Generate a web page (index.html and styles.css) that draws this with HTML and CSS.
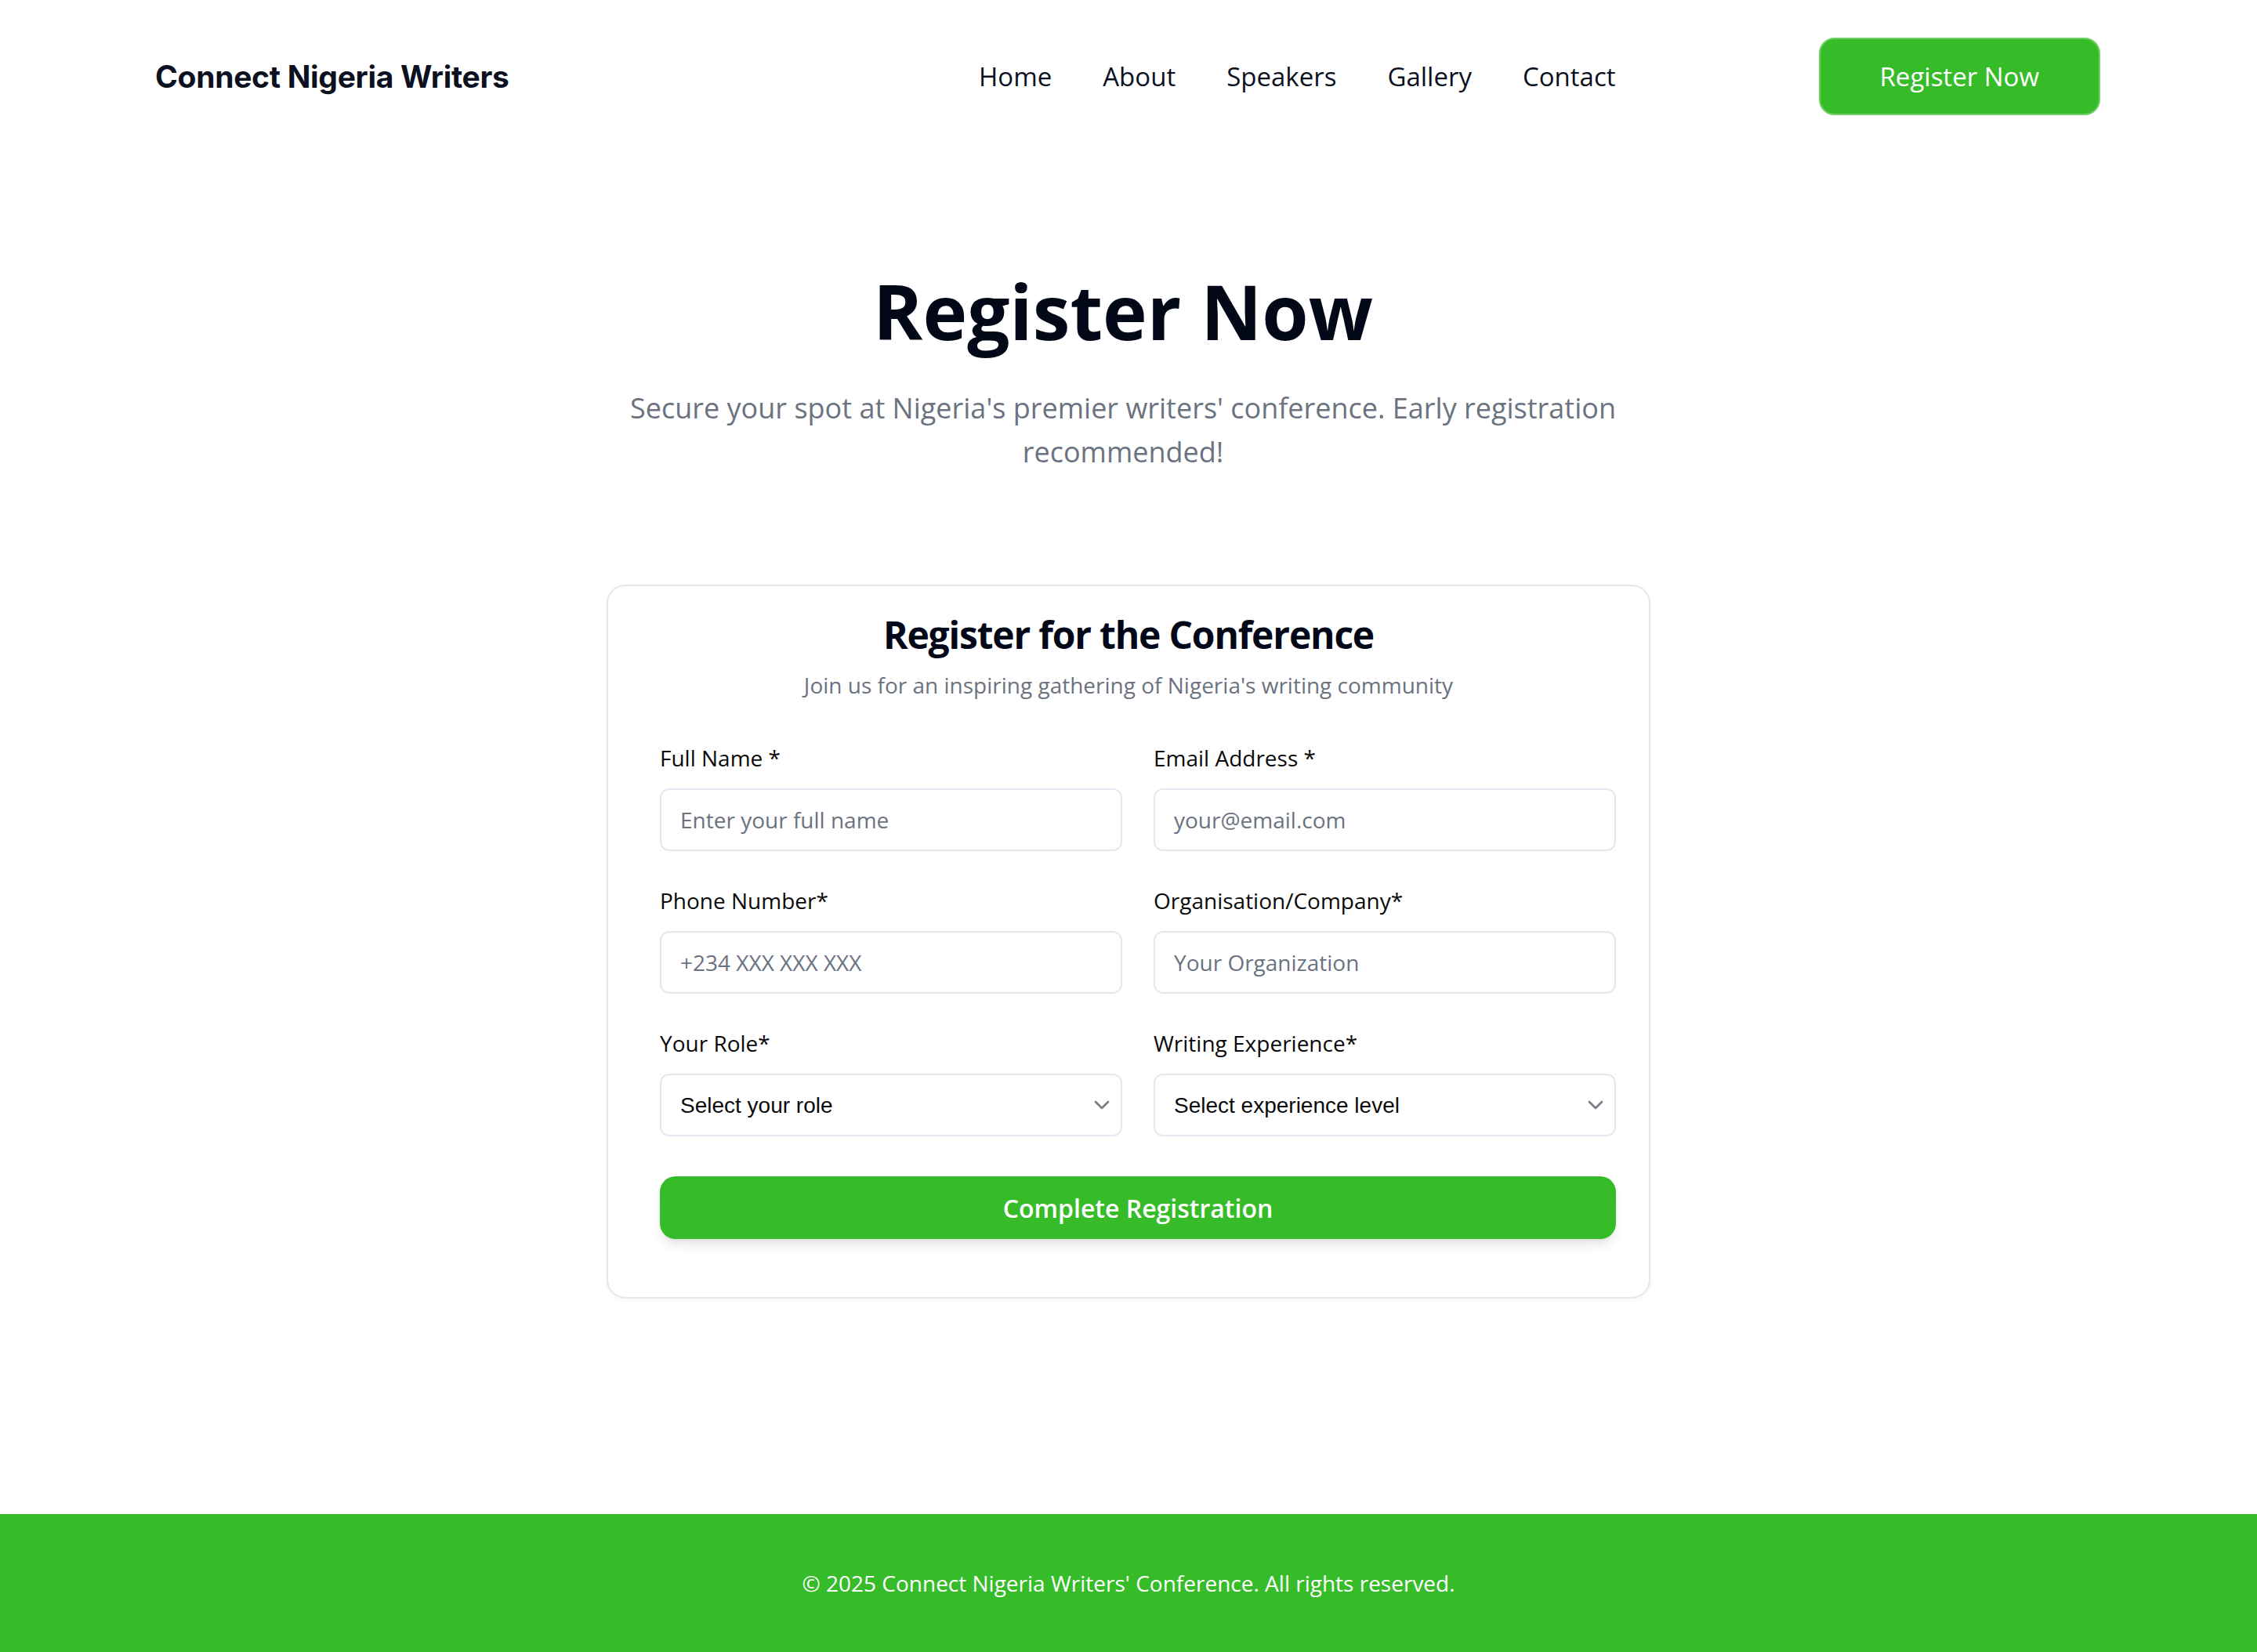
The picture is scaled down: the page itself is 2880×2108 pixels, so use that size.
FILE: index.html
```html
<!DOCTYPE html>
<html lang="en">
<head>
<meta charset="utf-8">
<title>Register Now - Connect Nigeria Writers</title>
<link rel="stylesheet" href="styles.css">
</head>
<body>
<header class="site-header">
  <a class="logo" href="#">Connect Nigeria Writers</a>
  <nav class="nav">
    <a href="#">Home</a>
    <a href="#">About</a>
    <a href="#">Speakers</a>
    <a href="#">Gallery</a>
    <a href="#">Contact</a>
  </nav>
  <a class="header-btn" href="#">Register Now</a>
</header>

<main class="main">
  <section class="hero">
    <h1 class="hero-title">Register Now</h1>
    <p class="hero-sub">Secure your spot at Nigeria's premier writers' conference. Early registration recommended!</p>
  </section>

  <section class="card">
    <div class="card-head">
      <h2 class="card-title">Register for the Conference</h2>
      <p class="card-sub">Join us for an inspiring gathering of Nigeria's writing community</p>
    </div>
    <form class="form">
      <div class="grid">
        <div class="field">
          <label class="label" for="name">Full Name *</label>
          <input class="input" id="name" type="text" placeholder="Enter your full name">
        </div>
        <div class="field">
          <label class="label" for="email">Email Address *</label>
          <input class="input" id="email" type="email" placeholder="your@email.com">
        </div>
        <div class="field">
          <label class="label" for="phone">Phone Number*</label>
          <input class="input" id="phone" type="tel" placeholder="+234 XXX XXX XXX">
        </div>
        <div class="field">
          <label class="label" for="org">Organisation/Company*</label>
          <input class="input" id="org" type="text" placeholder="Your Organization">
        </div>
        <div class="field">
          <label class="label" for="role">Your Role*</label>
          <div class="select-wrap">
            <select class="select" id="role">
              <option>Select your role</option>
            </select>
            <svg class="chev" viewBox="0 0 24 24" fill="none" stroke="currentColor" stroke-width="2" stroke-linecap="round" stroke-linejoin="round"><path d="m6 9 6 6 6-6"/></svg>
          </div>
        </div>
        <div class="field">
          <label class="label" for="exp">Writing Experience*</label>
          <div class="select-wrap">
            <select class="select" id="exp">
              <option>Select experience level</option>
            </select>
            <svg class="chev" viewBox="0 0 24 24" fill="none" stroke="currentColor" stroke-width="2" stroke-linecap="round" stroke-linejoin="round"><path d="m6 9 6 6 6-6"/></svg>
          </div>
        </div>
      </div>
      <button class="submit" type="button">Complete Registration</button>
    </form>
  </section>
</main>

<footer class="footer">
  <p>© 2025 Connect Nigeria Writers' Conference. All rights reserved.</p>
</footer>
</body>
</html>
```

FILE: styles.css
```css
* { box-sizing: border-box; }

html, body { margin: 0; padding: 0; }

body {
  min-height: 100vh;
  display: flex;
  flex-direction: column;
  font-family: "Open Sans", "Noto Sans", sans-serif;
  color: #020817;
  background: #ffffff;
}

a { text-decoration: none; color: inherit; }

.site-header {
  display: flex;
  align-items: center;
  height: 195px;
  padding: 0 200px 0 198px;
}

.logo {
  font-family: Inter, "Liberation Sans", sans-serif;
  font-weight: 700;
  font-size: 39px;
  line-height: 56px;
  color: #0b1120;
  letter-spacing: -0.3px;
}

.nav {
  margin-left: auto;
  display: flex;
  gap: 65px;
}

.nav a {
  font-size: 33px;
  line-height: 48px;
  font-weight: 500;
  color: #0b1120;
}

.header-btn {
  margin-left: 259px;
  background: #37bc29;
  border: 2px solid #72cf66;
  border-radius: 20px;
  color: #ffffff;
  font-size: 33px;
  line-height: 48px;
  font-weight: 500;
  padding: 23.5px 76px;
}

.main {
  flex: 1;
  display: flex;
  flex-direction: column;
  align-items: center;
}

.hero {
  padding-top: 154px;
  padding-right: 14px;
  text-align: center;
  max-width: 1358px;
}

.hero-title {
  margin: 0;
  font-size: 96px;
  line-height: 96px;
  font-weight: 700;
  color: #020817;
}

.hero-sub {
  margin: 48px 0 0;
  font-size: 36px;
  line-height: 56px;
  color: #6b7280;
}

.card {
  margin-top: 141px;
  width: 1332px;
  border: 2px solid #e3e8f0;
  border-radius: 24px;
  background: #ffffff;
  box-shadow: 0 2px 6px rgba(15, 23, 42, 0.04);
}

.card-head {
  padding-top: 30px;
  text-align: center;
}

.card-title {
  margin: 0;
  font-size: 48px;
  line-height: 64px;
  font-weight: 700;
  letter-spacing: -1.2px;
  color: #020817;
}

.card-sub {
  margin: 12px 0 0;
  font-size: 28px;
  line-height: 40px;
  color: #6b7280;
}

.form {
  padding: 53px 42px 74px 66px;
}

.grid {
  display: grid;
  grid-template-columns: 1fr 1fr;
  column-gap: 40px;
  row-gap: 43px;
}

.label {
  display: block;
  font-size: 28px;
  line-height: 40px;
  font-weight: 500;
  color: #0a0a0a;
  margin-bottom: 19px;
}

.input,
.select {
  display: block;
  width: 100%;
  height: 80px;
  border: 2px solid #e3e8f0;
  border-radius: 12px;
  background: #ffffff;
  padding: 0 24px;
  outline: none;
}

.input {
  font-family: "Open Sans", sans-serif;
  font-size: 28px;
  color: #0a0a0a;
}

.input::placeholder { color: #6b7280; }

.select-wrap { position: relative; }

.select {
  -webkit-appearance: none;
  appearance: none;
  font-family: "Liberation Sans", Arial, sans-serif;
  font-size: 28px;
  color: #0a0a0a;
}

.chev {
  position: absolute;
  right: 10px;
  top: 24px;
  width: 32px;
  height: 32px;
  color: #7a7e87;
  pointer-events: none;
}

.submit {
  display: block;
  width: 100%;
  height: 80px;
  margin-top: 51px;
  border: none;
  border-radius: 20px;
  background: #37bc29;
  color: #ffffff;
  font-family: "Open Sans", sans-serif;
  font-size: 32px;
  font-weight: 600;
  box-shadow: 0 10px 15px -3px rgba(0, 0, 0, 0.1), 0 4px 6px -4px rgba(0, 0, 0, 0.1);
}

.footer {
  background: #37bc29;
  padding: 68px 0;
  text-align: center;
}

.footer p {
  margin: 0;
  font-size: 28px;
  line-height: 40px;
  color: #ffffff;
}
```
